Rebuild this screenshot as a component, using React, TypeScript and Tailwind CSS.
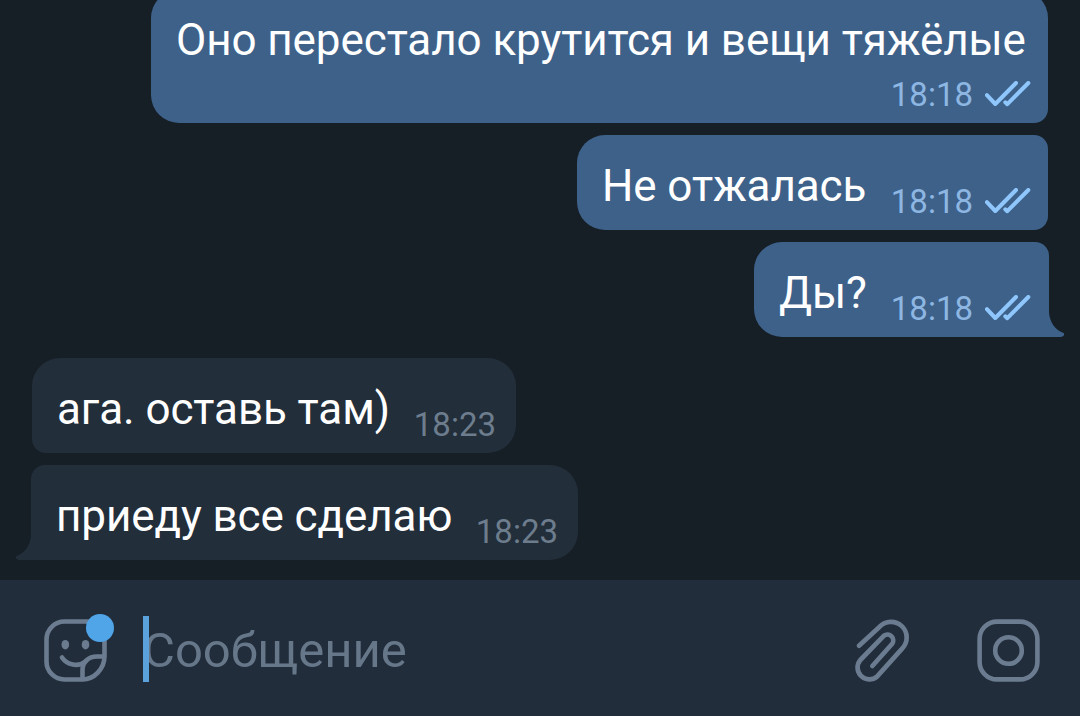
import clsx from 'clsx';

type Message = {
  text: string;
  time: string;
  own: boolean;
  tail?: boolean;
  className: string;
  textClassName: string;
};

const messages: Message[] = [
  {
    text: 'Оно перестало крутится и вещи тяжёлые',
    time: '18:18',
    own: true,
    className: '-mt-[10px] mr-8 h-[133px] w-[897px] self-end rounded-[28px] rounded-br-[14px] pt-6',
    textClassName: 'self-start',
  },
  {
    text: 'Не отжалась',
    time: '18:18',
    own: true,
    className: 'mt-3 mr-8 h-[95px] w-[471px] self-end rounded-l-[28px] rounded-r-[14px]',
    textClassName: 'pb-[18px]',
  },
  {
    text: 'Ды?',
    time: '18:18',
    own: true,
    tail: true,
    className: 'mt-3 mr-[31px] h-[95px] w-[295px] self-end rounded-l-[28px] rounded-tr-[14px]',
    textClassName: 'pb-[18px]',
  },
  {
    text: 'ага. оставь там)',
    time: '18:23',
    own: false,
    className: 'mt-[21px] ml-8 h-[95px] w-[484px] rounded-[28px] rounded-bl-[14px]',
    textClassName: 'pb-[18px]',
  },
  {
    text: 'приеду все сделаю',
    time: '18:23',
    own: false,
    tail: true,
    className: 'mt-3 ml-[31px] h-[95px] w-[547px] rounded-r-[28px] rounded-tl-[14px]',
    textClassName: 'pb-[18px]',
  },
];

function Checks() {
  return (
    <svg width="46" height="26" viewBox="0 0 46 26" className="mb-4 ml-3 shrink-0" fill="none" stroke="#8fc7fd" strokeWidth="4" strokeLinecap="round" strokeLinejoin="round">
      <path d="M1.9 14.2 10.3 23 31 2" />
      <path d="m20.3 21.3 2 1.9L43.3 2" />
    </svg>
  );
}

function Tail({ own }: { own: boolean }) {
  return (
    <svg
      width="17"
      height="25"
      viewBox="0 0 17 25"
      className={clsx('absolute bottom-0', own ? 'left-full -ml-px fill-[#3e618a]' : 'right-full -mr-px -scale-x-100 fill-[#222e3a]')}
    >
      <path d="M0 0h1C1.500 10 7 18 16 21.300c.7 1.700-.9 3.700-3.200 3.700H0Z" />
    </svg>
  );
}

function Bubble({ message }: { message: Message }) {
  const { text, time, own, tail, className, textClassName } = message;
  return (
    <div className={clsx('relative flex shrink-0 items-end pl-[25px]', own ? 'bg-[#3e618a]' : 'bg-[#222e3a]', className)}>
      <span className={clsx('text-[44px] leading-[52px] tracking-[-0.09px] whitespace-nowrap text-white', textClassName)}>{text}</span>
      <div className={clsx('flex flex-1 items-end justify-end', own ? 'pr-[17px]' : 'pr-5', own && tail && 'pr-[18px]', text.length > 30 && '-ml-40')}>
        <span className={clsx('pb-2 text-[33px] leading-10', own ? 'text-[#8db7e2]' : 'text-[#6d7d8d]')}>{time}</span>
        {own && <Checks />}
      </div>
      {tail && <Tail own={own} />}
    </div>
  );
}

function StickerIcon() {
  return (
    <svg width="64" height="64" viewBox="0 0 64 64" fill="none" stroke="#6c7c90" strokeWidth="4.6" strokeLinecap="round" strokeLinejoin="round">
      <path d="M60.500 37V20.500a18 18 0 0 0-18-18h-22a18 18 0 0 0-18 18v22a18 18 0 0 0 18 18h18C50 60.500 60.500 50 60.500 37Z" />
      <path d="M60 37.500h-7C44.500 37.500 38.500 43 38.500 51v9" />
      <path d="M18 38.500c5 7.500 16 10 23.500 4" />
      <g fill="#6c7c90" stroke="none">
        <ellipse cx="21.300" cy="25.700" rx="3.800" ry="4.800" />
        <ellipse cx="41.500" cy="25.700" rx="3.800" ry="4.800" />
      </g>
    </svg>
  );
}

function ClipIcon() {
  return (
    <svg width="56" height="64" viewBox="45 54 168 192" fill="none" stroke="#6c7c90" strokeWidth="14" strokeLinecap="round" strokeLinejoin="round">
      <path d="M60 134 122 77A46 46 0 0 1 190 142L114 227A35.500 35.500 0 0 1 64 177L135 104A17.500 17.500 0 0 1 159 129L100 195" />
    </svg>
  );
}

function CameraIcon() {
  return (
    <svg width="64" height="64" viewBox="0 0 64 64" fill="none" stroke="#6c7c90" strokeWidth="4.600">
      <rect x="2.600" y="2.600" width="57.800" height="57.800" rx="17.500" />
      <circle cx="31.500" cy="31.500" r="13.300" />
    </svg>
  );
}

function Composer() {
  return (
    <footer className="flex h-[136px] items-start bg-[#222d3b]">
      <div className="relative mt-[39px] ml-[44px]">
        <StickerIcon />
        <span className="absolute -top-[5px] left-[42px] size-7 rounded-full bg-[#50a5e9]" />
      </div>
      <div className="relative mt-9 ml-[35px] flex h-[66px] flex-1 items-center">
        <span className="pt-1 text-[49px] leading-[58px] text-[#67778a]">Сообщение</span>
        <span className="absolute inset-y-0 left-0 w-1.5 bg-[#5ba2dc]" />
      </div>
      <div className="mt-[39px] mr-[67px]">
        <ClipIcon />
      </div>
      <div className="mt-[39px] mr-[39px]">
        <CameraIcon />
      </div>
    </footer>
  );
}

export default function App() {
  return (
    <div className="flex h-[716px] w-[1080px] flex-col overflow-hidden bg-[#161e26] font-[Roboto,sans-serif]">
      <main className="flex h-[580px] flex-col items-start overflow-hidden">
        {messages.map((message) => (
          <Bubble key={message.text} message={message} />
        ))}
      </main>
      <Composer />
    </div>
  );
}
